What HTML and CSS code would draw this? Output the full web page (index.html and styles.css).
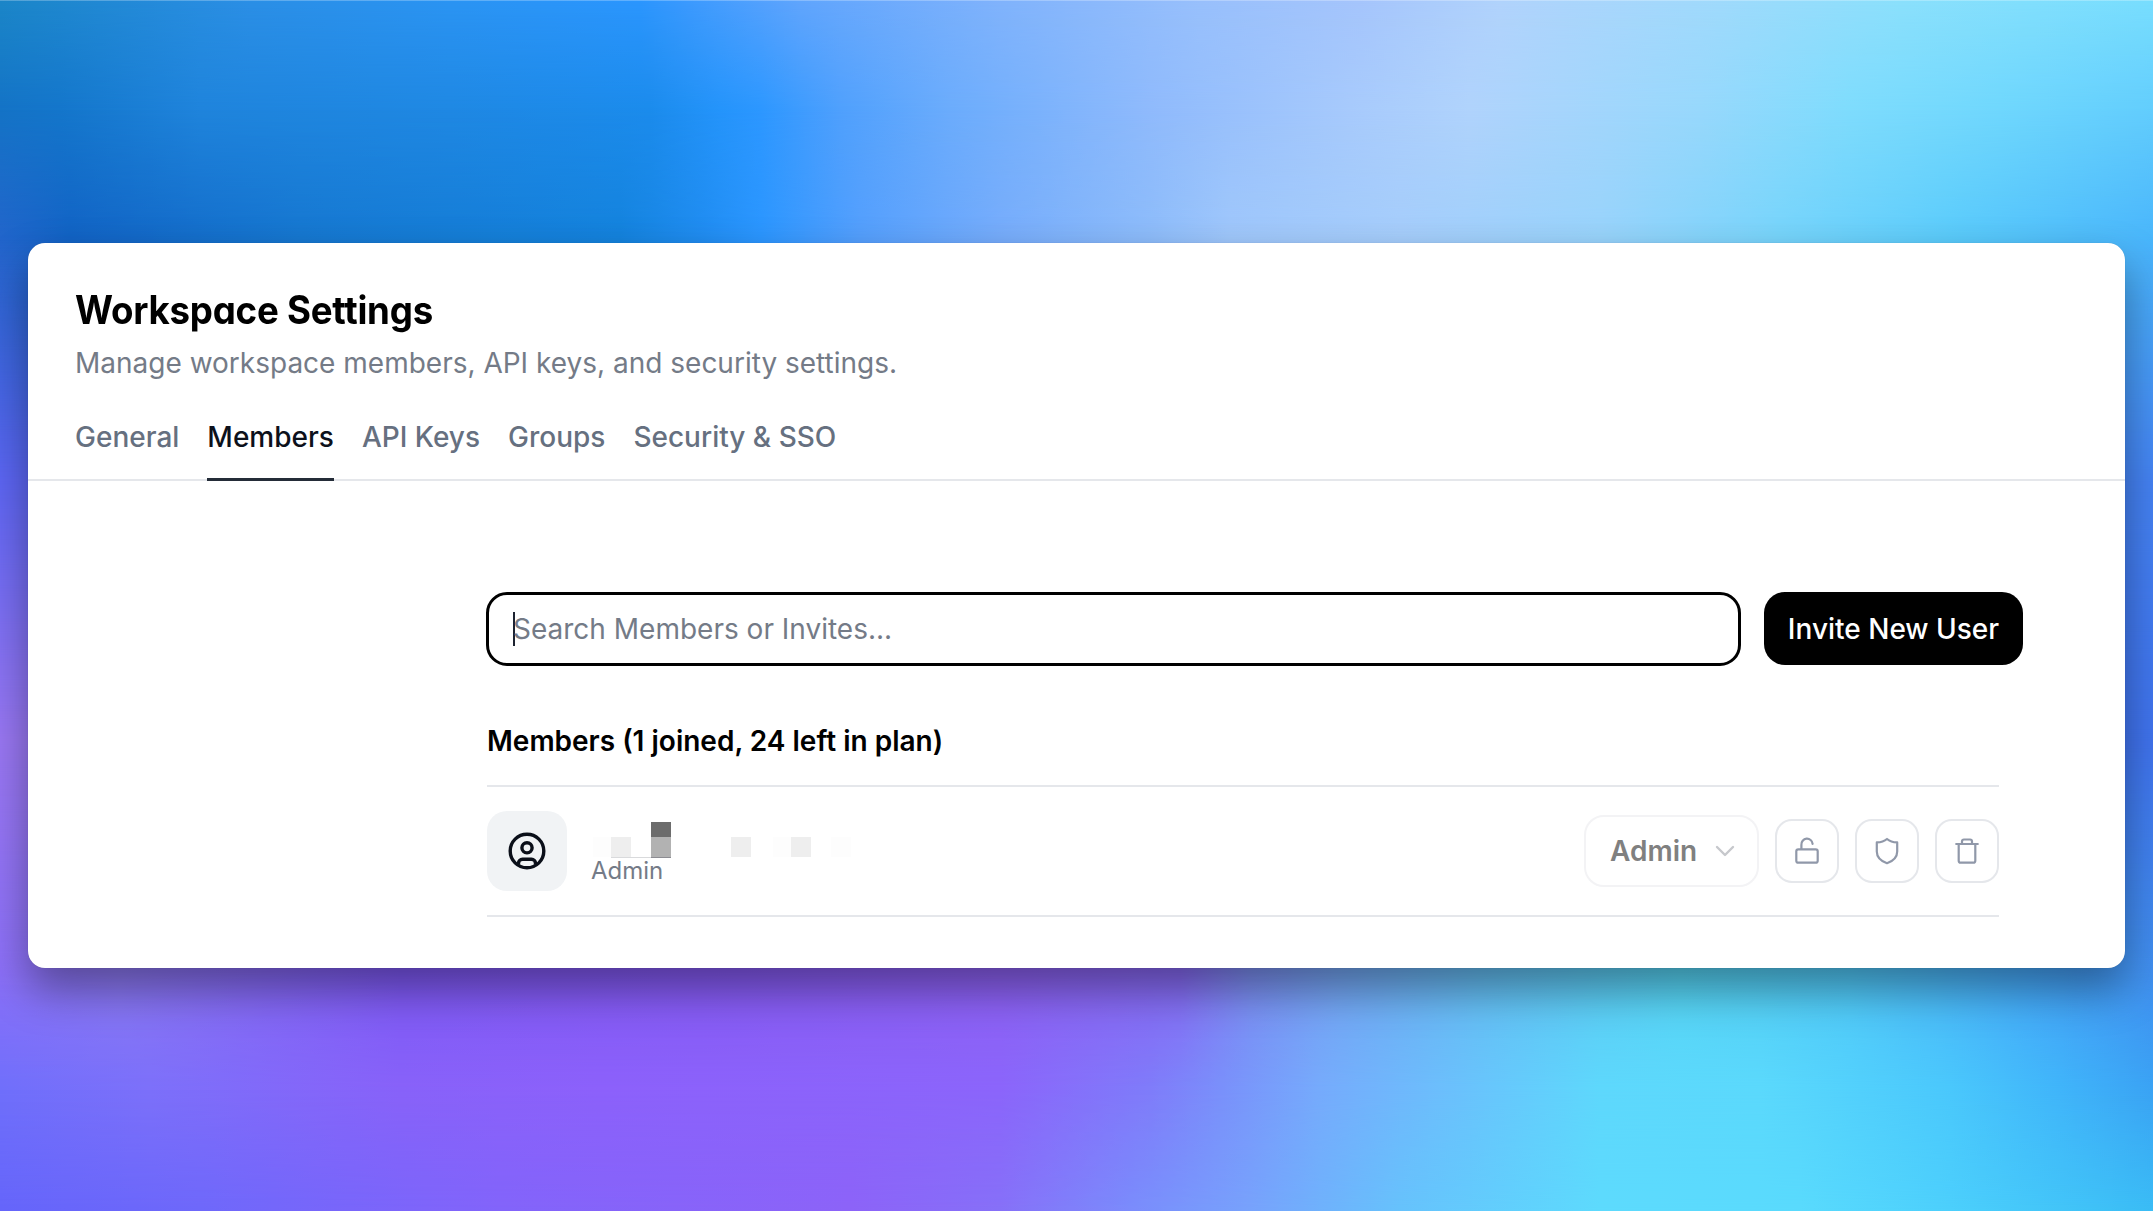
FILE: index.html
```html
<!DOCTYPE html>
<html lang="en">
<head>
<meta charset="utf-8">
<title>Workspace Settings</title>
<link rel="stylesheet" href="styles.css">
</head>
<body>
<div class="backdrop">
  <div class="band band-1"></div>
  <div class="band band-2"></div>
  <div class="band band-3"></div>
  <div class="band band-4"></div>
  <div class="band band-5"></div>
  <div class="band band-6"></div>
  <div class="band band-7"></div>
  <div class="band band-8"></div>
</div>
<main class="card">
  <header class="header">
    <h1 class="title">Workspace Settings</h1>
    <p class="subtitle">Manage workspace members, API keys, and security settings.</p>
    <nav class="tabs">
      <a class="tab">General</a>
      <a class="tab tab-active">Members</a>
      <a class="tab">API Keys</a>
      <a class="tab">Groups</a>
      <a class="tab">Security &amp; SSO</a>
    </nav>
  </header>
  <section class="content">
    <div class="toolbar">
      <div class="search"><span class="caret"></span><span class="placeholder">Search Members or Invites...</span></div>
      <button class="invite">Invite New User</button>
    </div>
    <h2 class="list-title">Members (1 joined, 24 left in plan)</h2>
    <div class="member">
      <div class="avatar">
        <svg width="40" height="40" viewBox="0 0 40 40" fill="none" stroke="#0b0f19" stroke-width="3.4" stroke-linejoin="round"><circle cx="20" cy="20" r="16.8"/><circle cx="20" cy="16.800" r="5.100"/><path d="M11.500 33.800v-1.500a4 4 0 0 1 4-4h9a4 4 0 0 1 4 4v1.500"/></svg>
      </div>
      <div class="identity">
        <svg class="redacted" width="260" height="38" viewBox="0 0 260 38" shape-rendering="crispEdges"><path fill="#fdfdfd" d="M1 16h18v20H1zM239 16h20v20h-20zM181 16h18v20h-18z"/><path fill="#eee" d="M19 16h20v20H19zM139 16h20v20h-20zM199 16h20v20h-20z"/><path fill="#6c6c6c" d="M59 1h20v15H59z"/><path fill="#b2b2b2" d="M59 16h20v20H59z"/><path fill="#d9dadc" d="M19 36h40v1H19z"/><path fill="#8c8c92" d="M59 36h20v1H59z"/></svg>
        <span class="role">Admin</span>
      </div>
      <div class="actions">
        <div class="select"><span>Admin</span><svg width="20" height="12" viewBox="0 0 20 12" fill="none" stroke="#c6c8cc" stroke-width="2.400" stroke-linecap="round" stroke-linejoin="round"><path d="M2 2l8 8 8-8"/></svg></div>
        <button class="icon-button"><svg width="32" height="32" viewBox="0 0 32 32" fill="none" stroke="#9098a9" stroke-width="2.200" stroke-linecap="round" stroke-linejoin="round"><rect x="5.300" y="14.300" width="21.400" height="13.400" rx="2"/><path d="M10.400 14v-4.200a5.600 5.600 0 0 1 11.200-1"/></svg></button>
        <button class="icon-button"><svg width="32" height="32" viewBox="0 0 32 32" fill="none" stroke="#9098a9" stroke-width="2.200" stroke-linejoin="round"><path d="M16 4c2.800 2.400 6 3.300 10.200 3.400v9C26.200 22.200 22 26 16 28.200 10 26 5.800 22.200 5.800 16.400v-9C10 7.300 13.200 6.400 16 4z"/></svg></button>
        <button class="icon-button"><svg width="32" height="32" viewBox="0 0 32 32" fill="none" stroke="#9098a9" stroke-width="2.200" stroke-linecap="round" stroke-linejoin="round"><path d="M5.200 9h21.600M7.700 9v16.700a2 2 0 0 0 2 2h12.600a2 2 0 0 0 2-2V9M11 9V6.500a2 2 0 0 1 2-2h6a2 2 0 0 1 2 2V9"/></svg></button>
      </div>
    </div>
  </section>
</main>
</body>
</html>
```
FILE: styles.css
```css
* { box-sizing: border-box; }
body { margin: 0; width: 2153px; height: 1211px; overflow: hidden; padding: 243px 28px 0; font-family: Inter, sans-serif; font-size: 28px; position: relative; }
h1, h2, p { margin: 0; }
button { font: inherit; padding: 0; }

/* Soft colour mesh: horizontal gradients, each faded in below the one before. */
.backdrop { position: absolute; inset: 0; overflow: hidden; }
.band { position: absolute; inset: 0; }
.band-1 { background: linear-gradient(90deg, #1b86c8 0, #2189d4 100px, #2b8fe6 250px, #2b94f3 450px, #2b96fe 640px, #3c9afe 690px, #60a5fd 800px, #80b3fc 1000px, #98c0fc 1200px, #a5c5fc 1360px, #b1d3fc 1500px, #9fdafc 1720px, #8be0fc 1900px, #78defe 2153px); }
.band-2 { background: linear-gradient(90deg, #1473c6 0, #1476cb 60px, #1f84dc 200px, #1f88e3 450px, #1b8bec 650px, #2494fb 720px, #2c97ff 760px, #4fa0fd 840px, #6bacfc 950px, #8fbafc 1150px, #a7cafc 1350px, #b0d3fc 1470px, #97d8fc 1700px, #7edcfd 1850px, #6fd7fd 2000px, #62cdfd 2153px); }
.band-3 { background: linear-gradient(90deg, #2265cb 0, #1263c5 70px, #1677d0 300px, #1483dd 620px, #208cf0 700px, #2b96ff 760px, #549ffd 860px, #76acfb 1000px, #8dbcfa 1150px, #9fc7fb 1230px, #a5cdfb 1400px, #98d3fb 1600px, #76d4fb 1780px, #5acbfb 1950px, #49b5fb 2153px); }
.band-4 { background: linear-gradient(90deg, #5d66f4 0, #5d66f4 50px, #4583f4 2100px, #4583f4 2153px); }
.band-5 { background: linear-gradient(90deg, #9a78f4 0, #9a78f4 50px, #4073ee 2100px, #4073ee 2153px); }
.band-6 { background: linear-gradient(90deg, #8c70f8 0, #8c78f2 120px, #7d58f4 400px, #8459f2 700px, #8c60f2 1000px, #8668f2 1180px, #7a8cf0 1250px, #72a4f2 1340px, #63bcf2 1480px, #55d4f4 1680px, #50c8f8 1850px, #45a6f8 2030px, #418ff0 2153px); }
.band-7 { background: linear-gradient(90deg, #6f6ffb 0, #7c70fa 150px, #8862f9 400px, #8c61fb 600px, #8b65fb 1000px, #7f7cfa 1150px, #7a90fb 1220px, #76abfc 1320px, #6bc0fc 1450px, #5ed8fc 1600px, #5bd9fc 1760px, #4ac8fc 1950px, #40b5fa 2060px, #3aa3f4 2153px); }
.band-8 { background: linear-gradient(90deg, #6565fa 0, #6e68fa 200px, #8264fa 500px, #8c63f8 850px, #8670f8 1000px, #7a8cfc 1130px, #77a2fc 1250px, #66c2fc 1400px, #5ddafd 1600px, #59dafd 1800px, #4ccffc 1950px, #3abcf5 2153px); }
.band-2 { -webkit-mask-image: linear-gradient(180deg, transparent 0, #000 110px); }
.band-3 { -webkit-mask-image: linear-gradient(180deg, transparent 110px, #000 240px); }
.band-4 { -webkit-mask-image: linear-gradient(180deg, transparent 240px, #000 480px); }
.band-5 { -webkit-mask-image: linear-gradient(180deg, transparent 480px, #000 740px); }
.band-6 { -webkit-mask-image: linear-gradient(180deg, transparent 740px, #000 970px); }
.band-7 { -webkit-mask-image: linear-gradient(180deg, transparent 970px, #000 1090px); }
.band-8 { -webkit-mask-image: linear-gradient(180deg, transparent 1090px, #000 1211px); }
.backdrop::after { content: ""; position: absolute; inset: 0; border-top: 1px solid rgba(255,255,255,.25); }

.card { position: relative; height: 725px; background: #fff; border-radius: 17px; overflow: clip; box-shadow: 0 22px 44px rgba(0,0,0,.38), 0 0 1px rgba(0,0,0,.2); }
.header { height: 238px; padding: 43px 47px 0; border-bottom: 2px solid #e5e7eb; display: flex; flex-direction: column; }
.title { font-size: 39px; line-height: 48px; font-weight: 750; letter-spacing: -0.250px; font-feature-settings: "cv11"; color: #000; white-space: nowrap; transform: scaleX(.94); transform-origin: 0 0; }
.subtitle { margin-top: 9px; line-height: 40px; color: #747b87; white-space: nowrap; }
.tabs { display: flex; gap: 28px; margin-top: 34px; height: 64px; }
.tab { line-height: 40px; font-weight: 500; color: #667080; height: 64px; }
.tab-active { color: #0d111b; border-bottom: 3px solid #242c38; }

.content { padding: 111px 102px 0 459px; display: flex; flex-direction: column; }
.toolbar { display: flex; gap: 23px; height: 74px; align-items: flex-start; }
.search { flex: 1; height: 74px; border: 3px solid #000; border-radius: 21px; display: flex; align-items: center; padding-left: 24px; margin-left: -1px; }
.caret { width: 2px; height: 34px; margin-right: -2px; background: #1c2230; }
.placeholder { color: #747b87; line-height: 40px; white-space: nowrap; }
.invite { width: 259px; height: 73px; border: 0; border-radius: 21px; background: #000; color: #fff; font-weight: 500; }
.list-title { margin-top: 55px; height: 64px; line-height: 40px; font-size: 28px; font-weight: 600; color: #000; }
.member { margin-right: 24px; height: 132px; border-top: 2px solid #e5e7eb; border-bottom: 2px solid #e5e7eb; display: flex; align-items: center; }
.avatar { width: 80px; height: 80px; border-radius: 20px; background: #f1f3f5; display: grid; place-items: center; }
.identity { margin-left: 25px; height: 80px; display: flex; flex-direction: column; padding-top: 10px; }
.redacted { display: block; flex: none; }
.role { font-size: 24px; line-height: 24px; color: #747b87; margin-left: -1px; }
.actions { margin-left: auto; display: flex; gap: 16px; align-items: center; }
.select { width: 175px; height: 72px; border: 2px solid #f3f3f5; border-radius: 20px; display: flex; align-items: center; justify-content: space-between; padding: 0 22px 0 24px; font-weight: 600; color: #808080; }
.icon-button { width: 64px; height: 64px; border: 2px solid #e5e7eb; border-radius: 17px; background: #fff; display: grid; place-items: center; }
.icon-button svg { display: block; }
```
